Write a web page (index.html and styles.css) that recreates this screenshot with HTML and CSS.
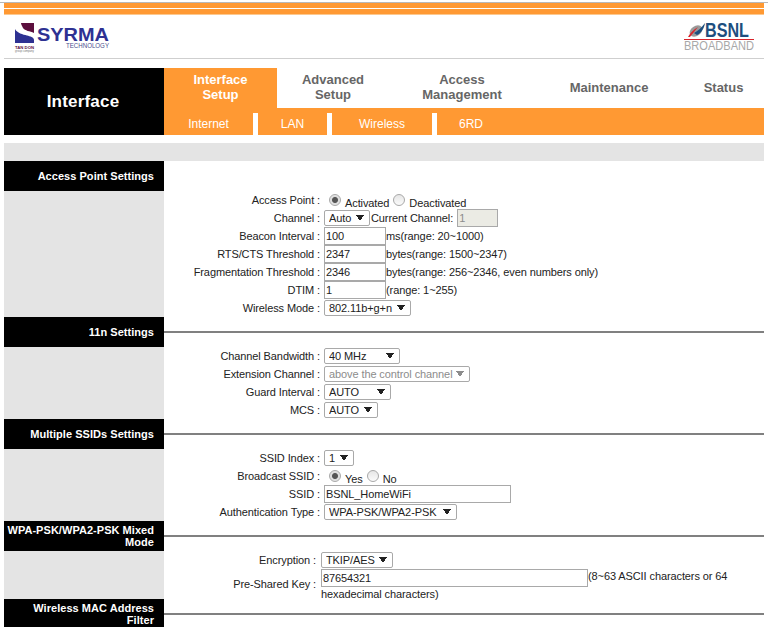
FILE: index.html
```html
<!DOCTYPE html>
<html lang="en">
<head>
<meta charset="utf-8">
<title>Interface Setup - Wireless</title>
<link rel="stylesheet" href="styles.css">
</head>
<body>
<div class="top-rule"></div>
<div class="page">
  <div class="stripe stripe-thin"></div>
  <div class="stripe stripe-thick"></div>
  <header class="brand">
    <svg class="logo logo-syrma" width="100" height="34" viewBox="0 0 100 34" role="img" aria-label="Syrma Technology">
      <path d="M6 1 H19 V11 C15 9 10 9 8 6 C7 4 6 2 6 1 Z" fill="#5c0f3e"/>
      <path d="M0 7 C2 11 8 12.5 12 13.5 C15 14.5 19 15 19 18 V21 H0 Z" fill="#2e3192"/>
      <text class="syrma-small" x="0" y="26.5" textLength="19" lengthAdjust="spacingAndGlyphs">TAN DON</text>
      <text class="syrma-tiny" x="0" y="30" textLength="19" lengthAdjust="spacingAndGlyphs">group company</text>
      <text class="syrma-name" x="22" y="19" textLength="72" lengthAdjust="spacingAndGlyphs">SYRMA</text>
      <text class="syrma-tech" x="51" y="26" textLength="43" lengthAdjust="spacingAndGlyphs">TECHNOLOGY</text>
    </svg>
    <svg class="logo logo-bsnl" width="72" height="32" viewBox="0 0 72 32" role="img" aria-label="BSNL Broadband">
      <ellipse cx="12" cy="8" rx="7" ry="5" fill="#9a9a9a" transform="rotate(-35 12 8)"/>
      <path d="M10 10 C14 8 17 5 21 0 C20 6 17 10 13 12 Z" fill="#1d4f7f"/>
      <path d="M4 14 C6 10 9 7 14 4 C11 8 8 11 6 14 Z" fill="#d8232a"/>
      <text class="bsnl-name" x="21" y="14" textLength="44" lengthAdjust="spacingAndGlyphs">BSNL</text>
      <rect x="0" y="16" width="70" height="1" fill="#d8232a"/>
      <text class="bsnl-sub" x="0" y="27" textLength="70" lengthAdjust="spacingAndGlyphs">BROADBAND</text>
    </svg>
  </header>

  <nav class="nav">
    <div class="nav-title">Interface</div>
    <div class="nav-main">
      <div class="tabs">
        <a class="tab tab-setup is-active">Interface<br>Setup</a>
        <a class="tab tab-advanced">Advanced<br>Setup</a>
        <a class="tab tab-access">Access<br>Management</a>
        <a class="tab tab-maintenance">Maintenance</a>
        <a class="tab tab-status">Status</a>
      </div>
      <div class="subtabs">
        <a class="subtab subtab-internet">Internet</a>
        <a class="subtab subtab-lan">LAN</a>
        <a class="subtab subtab-wireless">Wireless</a>
        <a class="subtab subtab-6rd">6RD</a>
      </div>
    </div>
  </nav>

  <div class="strip"></div>

  <main class="form">
    <section class="section">
      <h2 class="section-title">Access Point Settings</h2>
      <div class="section-rule section-rule-none"></div>
      <div class="section-side"></div>
      <div class="section-body">
        <div class="row">
          <span class="label">Access Point :</span>
          <span class="value">
            <input class="radio" type="radio" name="ap" checked><span class="radio-text">Activated</span>
            <input class="radio" type="radio" name="ap"><span class="radio-text">Deactivated</span>
          </span>
        </div>
        <div class="row">
          <span class="label">Channel :</span>
          <span class="value">
            <select class="select sel-channel"><option>Auto</option></select>
            <span class="after-select">Current Channel:</span>
            <input class="text text-current" type="text" value="1" disabled>
          </span>
        </div>
        <div class="row">
          <span class="label">Beacon Interval :</span>
          <span class="value"><input class="text text-short" type="text" value="100"><span>ms(range: 20~1000)</span></span>
        </div>
        <div class="row">
          <span class="label">RTS/CTS Threshold :</span>
          <span class="value"><input class="text text-short" type="text" value="2347"><span>bytes(range: 1500~2347)</span></span>
        </div>
        <div class="row">
          <span class="label">Fragmentation Threshold :</span>
          <span class="value"><input class="text text-short" type="text" value="2346"><span>bytes(range: 256~2346, even numbers only)</span></span>
        </div>
        <div class="row">
          <span class="label">DTIM :</span>
          <span class="value"><input class="text text-short" type="text" value="1"><span>(range: 1~255)</span></span>
        </div>
        <div class="row">
          <span class="label">Wireless Mode :</span>
          <span class="value"><select class="select sel-mode"><option>802.11b+g+n</option></select></span>
        </div>
      </div>
    </section>

    <section class="section">
      <h2 class="section-title">11n Settings</h2>
      <div class="section-rule"></div>
      <div class="section-side"></div>
      <div class="section-body">
        <div class="row">
          <span class="label">Channel Bandwidth :</span>
          <span class="value"><select class="select sel-bandwidth"><option>40 MHz</option></select></span>
        </div>
        <div class="row">
          <span class="label">Extension Channel :</span>
          <span class="value"><select class="select sel-extension" disabled><option>above the control channel</option></select></span>
        </div>
        <div class="row">
          <span class="label">Guard Interval :</span>
          <span class="value"><select class="select sel-guard"><option>AUTO</option></select></span>
        </div>
        <div class="row">
          <span class="label">MCS :</span>
          <span class="value"><select class="select sel-mcs"><option>AUTO</option></select></span>
        </div>
      </div>
    </section>

    <section class="section">
      <h2 class="section-title">Multiple SSIDs Settings</h2>
      <div class="section-rule"></div>
      <div class="section-side"></div>
      <div class="section-body">
        <div class="row">
          <span class="label">SSID Index :</span>
          <span class="value"><select class="select sel-index"><option>1</option></select></span>
        </div>
        <div class="row">
          <span class="label">Broadcast SSID :</span>
          <span class="value">
            <input class="radio" type="radio" name="bc" checked><span class="radio-text">Yes</span>
            <input class="radio" type="radio" name="bc"><span class="radio-text">No</span>
          </span>
        </div>
        <div class="row">
          <span class="label">SSID :</span>
          <span class="value"><input class="text text-ssid" type="text" value="BSNL_HomeWiFi"></span>
        </div>
        <div class="row">
          <span class="label">Authentication Type :</span>
          <span class="value"><select class="select sel-auth"><option>WPA-PSK/WPA2-PSK</option></select></span>
        </div>
      </div>
    </section>

    <section class="section">
      <h2 class="section-title">WPA-PSK/WPA2-PSK Mixed Mode</h2>
      <div class="section-rule"></div>
      <div class="section-side"></div>
      <div class="section-body">
        <div class="row row-wide">
          <span class="label">Encryption :</span>
          <span class="value"><select class="select sel-encryption"><option>TKIP/AES</option></select></span>
        </div>
        <div class="row row-wide row-key">
          <span class="label">Pre-Shared Key :</span>
          <span class="value-flow"><input class="text text-key" type="text" value="87654321">(8~63 ASCII characters or 64 hexadecimal characters)</span>
        </div>
      </div>
    </section>

    <section class="section">
      <h2 class="section-title">Wireless MAC Address Filter</h2>
      <div class="section-rule"></div>
    </section>
  </main>
</div>
</body>
</html>
```
FILE: styles.css
```css
* { box-sizing: border-box; }

html, body {
  margin: 0;
  height: 627px;
  overflow: hidden;
  background: #fff;
}

body {
  padding-top: 2px;
  font-family: "Liberation Sans", Arial, sans-serif;
  font-size: 11px;
  letter-spacing: -0.1px;
  color: #222;
}

.top-rule { height: 1px; background: #b8b8b8; }

.page { margin: 0 4px; }

.stripe { background: #ff9933; }
.stripe-thin { height: 5px; }
.stripe-thick { height: 6px; margin-top: 1px; border-bottom: 1px solid #fcc88f; }

/* Brand row */
.brand {
  height: 44px;
  border-bottom: 1px solid #cfcfcf;
  display: flex;
  justify-content: space-between;
  align-items: flex-start;
  padding: 7px 8px 0 11px;
}
.logo { overflow: visible; letter-spacing: 0; }
.logo-bsnl { margin-top: 1px; }

.syrma-small { font: bold 4px "Liberation Sans", sans-serif; fill: #5c0f3e; }
.syrma-tiny { font: 3px "Liberation Sans", sans-serif; fill: #777; }
.syrma-name { font: bold 18px "Liberation Sans", sans-serif; fill: #2e3192; }
.syrma-tech { font: 8px "Liberation Sans", sans-serif; fill: #4a4f8e; }
.bsnl-name { font: bold 21px "Liberation Sans", sans-serif; fill: #1d4f7f; }
.bsnl-sub { font: 12.5px "Liberation Sans", sans-serif; fill: #a8a8a8; }

/* Navigation */
.nav {
  margin-top: 9px;
  height: 67px;
  display: grid;
  grid-template-columns: 160px 1fr;
}
.nav-title {
  background: #000;
  color: #fff;
  font-size: 17px;
  font-weight: bold;
  letter-spacing: 0.2px;
  padding-right: 2px;
  display: flex;
  align-items: center;
  justify-content: center;
}
.nav-main { display: flex; flex-direction: column; }

.tabs { display: flex; height: 40px; }
.tab {
  display: flex;
  align-items: center;
  justify-content: center;
  text-align: center;
  padding-bottom: 2px;
  color: #666;
  font-size: 13px;
  font-weight: bold;
  letter-spacing: 0;
  line-height: 15px;
}
.tab.is-active { background: #ff9933; color: #fff; }
.tab-setup { width: 113px; }
.tab-advanced { width: 112px; }
.tab-access { width: 146px; }
.tab-maintenance { width: 148px; }
.tab-status { width: 81px; }

.subtabs {
  flex: 1;
  display: flex;
  padding-top: 5px;
  background: #ff9933;
  font-size: 12px;
  letter-spacing: 0;
}
.subtab {
  display: flex;
  align-items: center;
  justify-content: center;
  color: #fff;
  border-right: 5px solid #fff;
}
.subtab-internet { width: 94px; }
.subtab-lan { width: 74px; }
.subtab-wireless { width: 105px; }
.subtab-6rd { width: 68px; border-right: 0; }

.strip { height: 18px; margin-top: 8px; background: #e4e4e4; }

/* Form sections */
.section {
  display: grid;
  grid-template-columns: 160px 1fr;
}
.section-title {
  margin: 0;
  min-height: 30px;
  padding: 3px 10px 3px 2px;
  background: #000;
  color: #fff;
  font-size: 11px;
  font-weight: bold;
  letter-spacing: 0.04px;
  line-height: 12px;
  text-align: right;
  display: flex;
  align-items: center;
  justify-content: flex-end;
}
.section-rule { align-self: center; height: 2px; background: #808080; }
.section-rule-none { background: transparent; }
.section-side { background: #e4e4e4; }

.row {
  display: grid;
  grid-template-columns: 156px 1fr;
  column-gap: 4px;
  height: 18px;
  align-items: center;
}
.row-wide { grid-template-columns: 152px 1fr; column-gap: 5px; }
.row-key { height: 30px; }
.row-key .label { padding-bottom: 2px; }

.label { text-align: right; white-space: nowrap; }
.value { display: flex; align-items: center; height: 18px; white-space: nowrap; }
.value-flow { align-self: start; line-height: 14px; }

/* Controls */
.radio {
  appearance: none;
  width: 12px;
  height: 12px;
  margin: 0 4px 0 5px;
  border: 1px solid #a8a8a8;
  border-radius: 50%;
  background: linear-gradient(#e6e6e6, #fbfbfb);
}
.radio:checked {
  background: radial-gradient(circle, #555 0, #555 2.5px, #dcdcdc 3.5px, #f4f4f4 100%);
}
.radio + .radio-text + .radio { margin-left: 4px; }
.radio-text { padding-top: 6px; }

.select {
  appearance: none;
  height: 16px;
  margin: 0;
  padding: 0 0 0 4px;
  border: 1px solid #a9a9a9;
  border-radius: 2px;
  font: 11px "Liberation Sans", Arial, sans-serif;
  letter-spacing: -0.1px;
  color: #222;
  --arrow: #222;
  background-color: #fff;
  background-image:
    linear-gradient(to top right, transparent 50%, var(--arrow) 50%),
    linear-gradient(to top left, transparent 50%, var(--arrow) 50%);
  background-size: 4px 6px;
  background-repeat: no-repeat;
  background-position: right 9px center, right 5px center;
}
.select:disabled { color: #8c8c8c; --arrow: #8c8c8c; opacity: 1; }

.sel-channel { width: 46px; }
.sel-mode { width: 87px; }
.sel-bandwidth { width: 76px; }
.sel-extension { width: 146px; }
.sel-guard { width: 67px; }
.sel-mcs { width: 54px; }
.sel-index { width: 30px; }
.sel-auth { width: 133px; }
.sel-encryption { width: 72px; }

.after-select { margin-left: 1px; margin-right: 4px; }

.text {
  height: 18px;
  margin: 0;
  padding: 0 1px;
  border: 1px solid #a9a9a9;
  border-radius: 0;
  font: 11px "Liberation Sans", Arial, sans-serif;
  letter-spacing: -0.1px;
  color: #222;
  background: #fff;
}
.text:disabled { background: #ebebe4; color: #8c8c8c; }
.text-short { width: 62px; }
.text-current { width: 41px; }
.text-ssid { width: 187px; }
.text-key { width: 267px; vertical-align: top; }
```
